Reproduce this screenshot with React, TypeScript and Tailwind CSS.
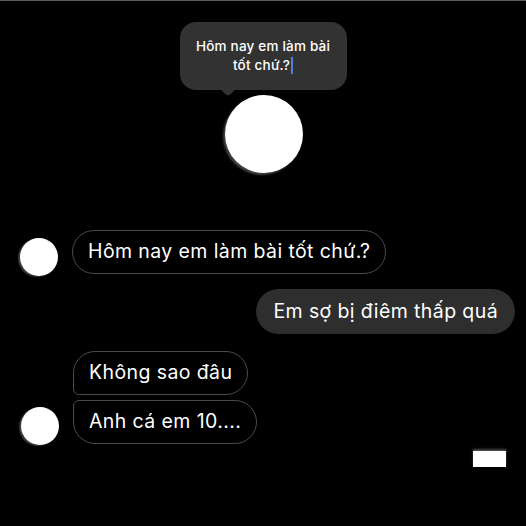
import React from "react";

const font = { fontFamily: "Inter, 'Liberation Sans', Arial, sans-serif" };

const Avatar = () => (
  <div className="w-[38px] h-[38px] rounded-full bg-white shadow-[-2px_1px_1px_rgba(120,120,120,0.5)] shrink-0" />
);

const App = () => {
  return (
    <div
      className="w-[526px] h-[526px] bg-black overflow-hidden flex flex-col text-white"
      style={font}
    >
      <div className="h-px bg-[#5a5a5a] w-full shrink-0" />

      {/* preview tooltip + avatar */}
      <div className="flex flex-col items-center mt-[21px]">
        <div className="flex flex-col">
          <div className="w-[167px] h-[68px] rounded-[16px] bg-[#323232] flex flex-col items-center justify-center text-[13.5px] leading-[19px] font-medium tracking-[0.2px]">
            <span>Hôm nay em làm bài</span>
            <span className="flex items-center">
              tốt chứ.?
              <span className="inline-block w-[2px] h-[17px] bg-[#4c82d8] ml-[1px]" />
            </span>
          </div>
          <svg width="14" height="6" viewBox="0 0 14 6" className="ml-[41px]">
            <path d="M0 0 H14 L9 4.5 Q7 6.2 5 4.5 Z" fill="#323232" />
          </svg>
        </div>
        <div className="w-[78px] h-[78px] rounded-full bg-white shadow-[-2px_2px_2px_rgba(110,110,110,0.6)] -mt-[1px] ml-[2px]" />
      </div>

      {/* chat */}
      <div className="flex flex-col mt-[57px] text-[19.5px] tracking-[0.4px]">
        <div className="flex items-end gap-[14px] pl-[20px]">
          <div className="mb-[-2px]">
            <Avatar />
          </div>
          <div className="h-[44px] px-[15px] flex items-center rounded-full border border-[#4a4a4a]">
            Hôm nay em làm bài tốt chứ.?
          </div>
        </div>

        <div className="flex justify-end pr-[11px] mt-[15px]">
          <div className="h-[45px] px-[17px] flex items-center rounded-full bg-[#2e2e2e]">
            Em sợ bị điêm thấp quá
          </div>
        </div>

        <div className="flex items-end gap-[14px] pl-[21px] mt-[17px]">
          <div className="mb-[-1px]">
            <Avatar />
          </div>
          <div className="flex flex-col items-start gap-[5px]">
            <div className="h-[44px] px-[15px] flex items-center rounded-[22px] rounded-bl-[6px] border border-[#4a4a4a]">
              Không sao đâu
            </div>
            <div className="h-[44px] px-[15px] flex items-center rounded-[22px] rounded-tl-[6px] border border-[#4a4a4a]">
              Anh cá em 10....
            </div>
          </div>
        </div>

        <div className="flex justify-end pr-[20px] mt-[7px]">
          <div className="w-[33px] h-[16px] bg-white shadow-[0_-2px_2px_rgba(150,150,150,0.5)]" />
        </div>
      </div>
    </div>
  );
};

export default App;
